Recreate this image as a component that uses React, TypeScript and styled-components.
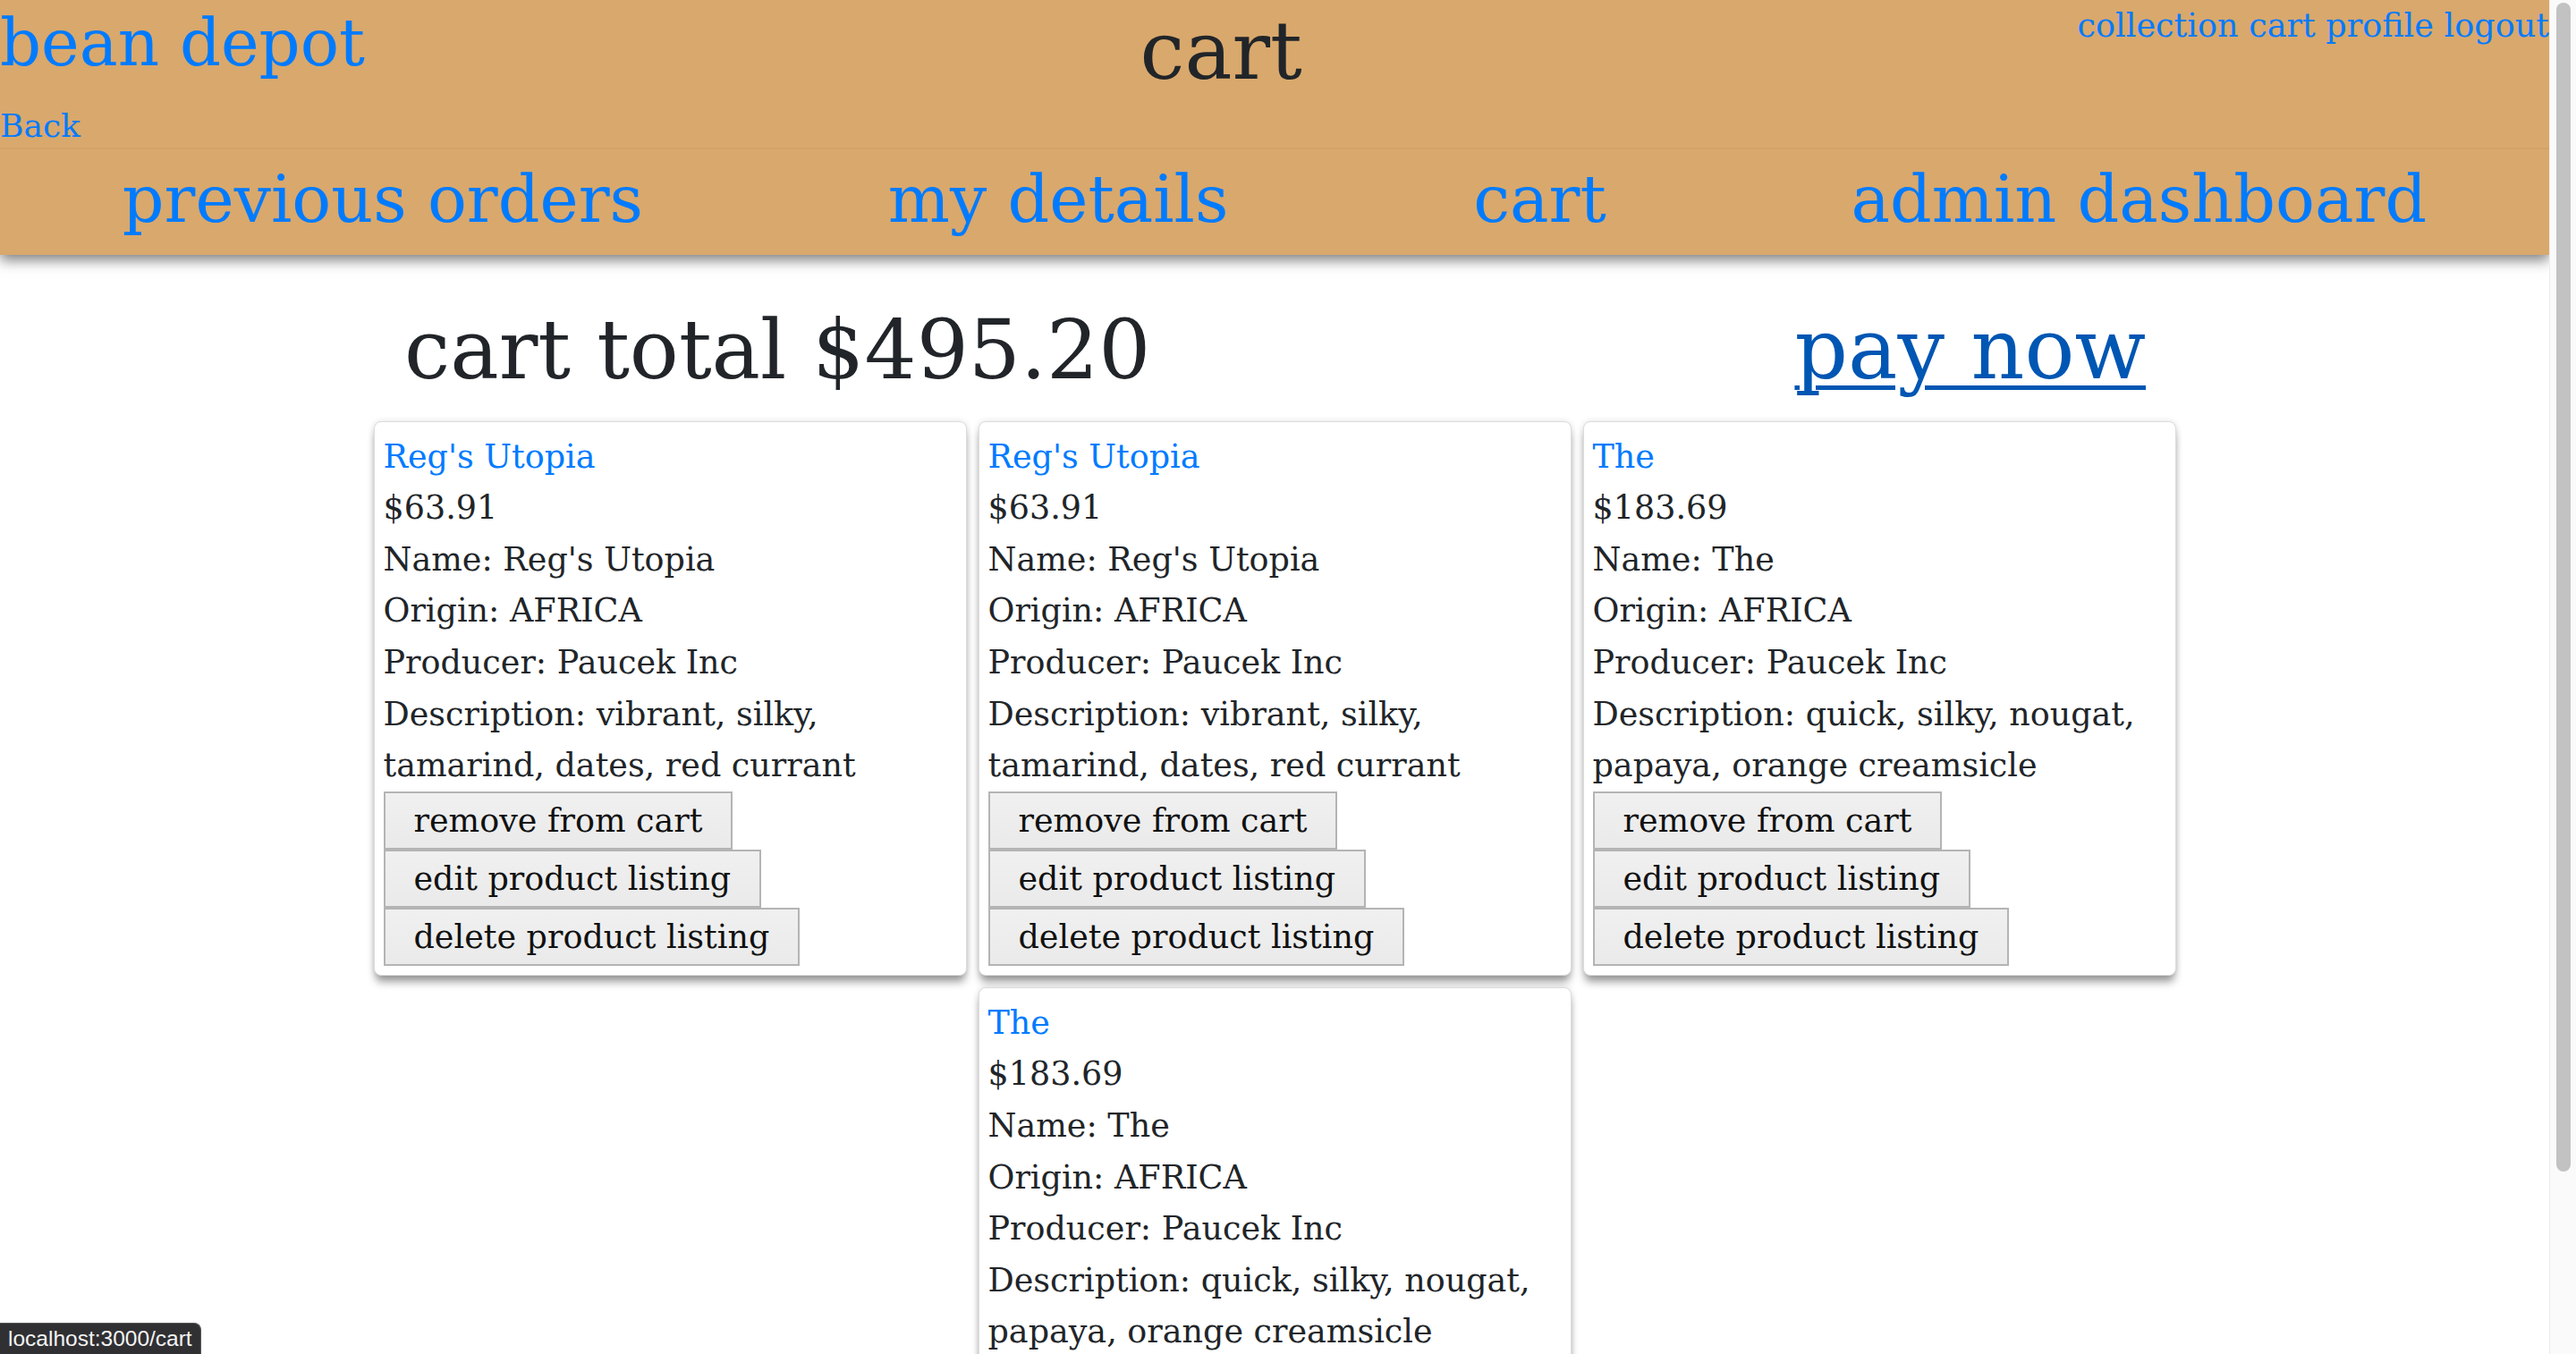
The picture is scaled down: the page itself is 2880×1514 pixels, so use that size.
import React from "react";
import styled, { createGlobalStyle } from "styled-components";

const GlobalStyle = createGlobalStyle`
  html, body { margin: 0; padding: 0; background: #ffffff; overflow: hidden; }
  body { font-family: "DejaVu Serif", "Liberation Serif", serif; color: #212529; }
  * { box-sizing: border-box; }
`;

const Viewport = styled.div`
  display: flex;
  width: 2880px;
  height: 1514px;
  overflow: hidden;
`;

const Page = styled.div`
  flex: 0 0 2850px;
  width: 2850px;
  height: 100%;
  overflow: hidden;
  display: flex;
  flex-direction: column;
`;

const Header = styled.header`
  position: relative;
  z-index: 2;
  flex: 0 0 auto;
  background: #d9a86c;
  box-shadow: 0 6px 14px rgba(0, 0, 0, 0.5);
`;

const TopRow = styled.div`
  display: flex;
  justify-content: space-between;
  align-items: flex-start;
  min-height: 165px;
`;

const Brand = styled.div`
  display: flex;
  flex-direction: column;
  align-items: flex-start;
`;

const BrandTitle = styled.a`
  font-size: 72px;
  line-height: 85px;
  padding-top: 6px;
  color: #007bff;
  text-decoration: none;
`;

const BackLink = styled.a`
  margin-top: 28px;
  font-size: 36px;
  line-height: 43px;
  color: #007bff;
  text-decoration: none;
`;

const PageTitle = styled.h1`
  margin: 4px 0 0;
  font-weight: 400;
  font-size: 89px;
  line-height: 1.2;
  color: #212529;
`;

const TopLinks = styled.nav`
  font-size: 36.6px;
  line-height: 57.6px;
  white-space: nowrap;
`;

const TopLink = styled.a`
  color: #007bff;
  text-decoration: none;
`;

const NavRow = styled.nav`
  display: flex;
  justify-content: space-around;
  align-items: baseline;
  border-top: 2px solid rgba(0, 0, 0, 0.03);
  padding: 12px 0 18px;
`;

const NavLink = styled.a`
  font-size: 73px;
  line-height: 1.2;
  color: #007bff;
  text-decoration: none;
`;

const Main = styled.main`
  width: 2016px;
  margin: 0 auto;
  padding-top: 51px;
`;

const SummaryRow = styled.div`
  display: flex;
  justify-content: space-between;
  align-items: baseline;
  padding: 0 34px 0 35px;
  margin-bottom: 24px;
`;

const Total = styled.h2`
  margin: 0;
  font-weight: 400;
  font-size: 91.4px;
  line-height: 110px;
  color: #212529;
`;

const PayNow = styled.a`
  font-size: 93px;
  line-height: 110px;
  color: #0056b3;
  text-decoration: underline;
  text-decoration-thickness: 5px;
  text-underline-offset: 8px;
`;

const CardGrid = styled.div`
  display: flex;
  flex-wrap: wrap;
  justify-content: center;
  gap: 13px;
`;

const Card = styled.article`
  flex: 0 0 663px;
  width: 663px;
  background: #ffffff;
  border: 1px solid #dcdcdc;
  border-radius: 8px;
  padding: 10px;
  box-shadow: 0 9px 10px -2px rgba(0, 0, 0, 0.38), 0 0 7px rgba(0, 0, 0, 0.12);
  font-size: 36.5px;
  line-height: 57.6px;
  color: #212529;
`;

const CardTitle = styled.a`
  display: block;
  color: #007bff;
  text-decoration: none;
`;

const Line = styled.div``;

const Actions = styled.div`
  display: flex;
  flex-direction: column;
  align-items: flex-start;
`;

const ActionButton = styled.button`
  font-family: inherit;
  font-size: 36.5px;
  line-height: 57px;
  padding: 2px 32px;
  border: 2px solid #b4b4b4;
  border-radius: 0;
  background: linear-gradient(#f0f0f0, #eaeaea);
  color: #111111;
  margin: 0;
`;

const ScrollTrack = styled.div`
  flex: 0 0 30px;
  height: 100%;
  background: #fafafa;
  border-left: 1px solid #ececec;
  padding: 3px 6px 0 7px;
`;

const ScrollThumb = styled.div`
  height: 1307px;
  border-radius: 8px;
  background: #c2c2c2;
`;

const StatusBar = styled.div`
  position: fixed;
  left: 0;
  bottom: 0;
  z-index: 5;
  height: 35px;
  padding: 0 9px;
  background: #303033;
  border: 1px solid #5a5a5e;
  border-left: none;
  border-bottom: none;
  border-top-right-radius: 8px;
  color: #f4f4f4;
  font-family: "Liberation Sans", Arial, sans-serif;
  font-size: 24.5px;
  line-height: 34px;
`;

type Product = {
  name: string;
  price: string;
  description: string;
};

const products: Product[] = [
  { name: "Reg's Utopia", price: "$63.91", description: "vibrant, silky, tamarind, dates, red currant" },
  { name: "Reg's Utopia", price: "$63.91", description: "vibrant, silky, tamarind, dates, red currant" },
  { name: "The", price: "$183.69", description: "quick, silky, nougat, papaya, orange creamsicle" },
  { name: "The", price: "$183.69", description: "quick, silky, nougat, papaya, orange creamsicle" },
];

const ProductCard: React.FC<{ p: Product }> = ({ p }) => (
  <Card>
    <CardTitle href="#">{p.name}</CardTitle>
    <Line>{p.price}</Line>
    <Line>Name: {p.name}</Line>
    <Line>Origin: AFRICA</Line>
    <Line>Producer: Paucek Inc</Line>
    <Line>Description: {p.description}</Line>
    <Actions>
      <ActionButton>remove from cart</ActionButton>
      <ActionButton>edit product listing</ActionButton>
      <ActionButton>delete product listing</ActionButton>
    </Actions>
  </Card>
);

export default function App() {
  return (
    <>
      <GlobalStyle />
      <Viewport>
        <Page>
          <Header>
            <TopRow>
              <Brand>
                <BrandTitle href="#">bean depot</BrandTitle>
                <BackLink href="#">Back</BackLink>
              </Brand>
              <PageTitle>cart</PageTitle>
              <TopLinks>
                <TopLink href="#">collection</TopLink> <TopLink href="#">cart</TopLink>{" "}
                <TopLink href="#">profile</TopLink> <TopLink href="#">logout</TopLink>
              </TopLinks>
            </TopRow>
            <NavRow>
              <NavLink href="#">previous orders</NavLink>
              <NavLink href="#">my details</NavLink>
              <NavLink href="#">cart</NavLink>
              <NavLink href="#">admin dashboard</NavLink>
            </NavRow>
          </Header>
          <Main>
            <SummaryRow>
              <Total>cart total $495.20</Total>
              <PayNow href="#">pay now</PayNow>
            </SummaryRow>
            <CardGrid>
              {products.map((p, i) => (
                <ProductCard key={i} p={p} />
              ))}
            </CardGrid>
          </Main>
        </Page>
        <ScrollTrack>
          <ScrollThumb />
        </ScrollTrack>
      </Viewport>
      <StatusBar>localhost:3000/cart</StatusBar>
    </>
  );
}
